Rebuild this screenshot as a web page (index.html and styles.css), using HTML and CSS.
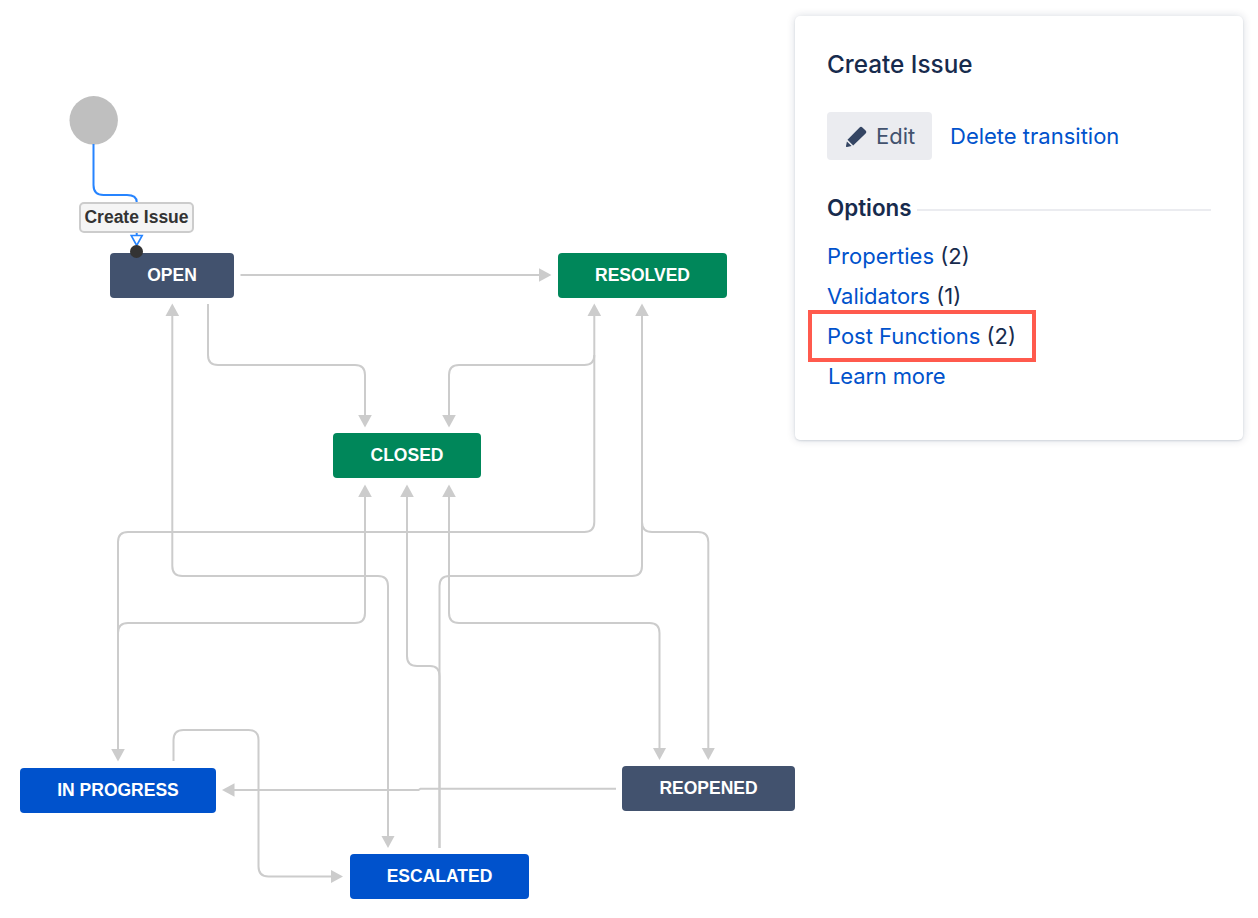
FILE: index.html
```html
<!DOCTYPE html>
<html lang="en">
<head>
<meta charset="utf-8">
<title>Create Issue transition</title>
<link rel="stylesheet" href="styles.css">
</head>
<body>
<main class="page">
  <section class="diagram">
    <svg class="edges" width="795" height="918" viewBox="0 0 795 918" aria-hidden="true">
      <defs>
        <marker id="arrow" markerUnits="userSpaceOnUse" markerWidth="14" markerHeight="14" viewBox="0 0 14 14" refX="6.5" refY="7" orient="auto-start-reverse">
          <polygon class="arrow-head" points="0,0.2 12.5,7 0,13.8"/>
        </marker>
      </defs>
      <circle class="start" cx="93.7" cy="120.3" r="24.2"/>
      <path class="edge-active" d="M93.5 144V185Q93.5 195 103.5 195H127Q136.7 195 136.7 202"/>
      <path class="edge-active" d="M136.7 232V236"/>
      <polygon class="arrow-open" points="131.2,235.5 142.2,235.5 136.7,245.5"/>
      <path class="edge head-end" d="M240.5 275H545.5"/>
      <path class="edge head-end" d="M208 304V355Q208 365 218 365H355Q365 365 365 375V421.5"/>
      <path class="edge head-both" d="M594.3 309.5V522Q594.3 532 584.3 532H128Q118 532 118 542V755.5"/>
      <path class="edge head-end" d="M594.3 355Q594.3 365 584.3 365H459Q449 365 449 375V421.5"/>
      <path class="edge head-both" d="M172.3 309.5V566Q172.3 576 182.3 576H378Q388 576 388 586V842"/>
      <path class="edge head-start" d="M365 490.5V613Q365 623 355 623H128Q118 623 118 633V740"/>
      <path class="edge head-start" d="M407 490.5V656Q407 666 417 666H430Q439.5 666 439.5 676V848"/>
      <path class="edge head-both" d="M449 490.5V613Q449 623 459 623H649.5Q659.5 623 659.5 633V754"/>
      <path class="edge head-start" d="M642 309.5V566Q642 576 632 576H449.5Q439.5 576 439.5 586V848"/>
      <path class="edge head-end" d="M642 320V522Q642 532 652 532H698Q708.3 532 708.3 542V754"/>
      <path class="edge head-end" d="M616 788.7H420.5L418.5 790H228"/>
      <path class="edge head-end" d="M173.5 761V740Q173.5 730 183.5 730H248.5Q258.5 730 258.5 740V866.5Q258.5 876.5 268.5 876.5H337"/>
    </svg>
    <div class="edge-label">Create Issue</div>
    <div class="node node-grey node-open">OPEN</div>
    <div class="node node-green node-resolved">RESOLVED</div>
    <div class="node node-green node-closed">CLOSED</div>
    <div class="node node-blue node-progress">IN PROGRESS</div>
    <div class="node node-grey node-reopened">REOPENED</div>
    <div class="node node-blue node-escalated">ESCALATED</div>
    <span class="endpoint"></span>
  </section>
  <aside class="panel">
    <h2 class="panel-title">Create Issue</h2>
    <div class="actions">
      <button class="edit-button" type="button">
        <svg class="pencil" width="21" height="21" viewBox="0 0 21 21" aria-hidden="true">
          <path d="M13.6 1.4a2 2 0 0 1 2.8 0l3.2 3.2a2 2 0 0 1 0 2.8L7.2 19.5 1.5 13.8zM.9 15.4l4.7 4.7-4.6.9a.8.8 0 0 1-1-1z"/>
        </svg>
        <span>Edit</span>
      </button>
      <a class="link" href="#">Delete transition</a>
    </div>
    <div class="section-head">
      <h3 class="section-title">Options</h3>
      <span class="section-rule"></span>
    </div>
    <ul class="options">
      <li><a class="link" href="#">Properties</a> (2)</li>
      <li><a class="link" href="#">Validators</a> (1)</li>
      <li class="highlighted"><a class="link" href="#">Post Functions</a> (2)</li>
      <li class="learn"><a class="link" href="#">Learn more</a></li>
    </ul>
  </aside>
</main>
</body>
</html>
```
FILE: styles.css
```css
*, *::after { box-sizing: border-box; }
html, body { margin: 0; padding: 0; background: #fff; }
body { font-family: Inter, "Liberation Sans", sans-serif; color: #172b4d; }

.page { display: flex; align-items: flex-start; width: 1258px; height: 918px; overflow: hidden; }

.diagram { position: relative; flex: 0 0 795px; height: 918px; }
.edges { position: absolute; left: 0; top: 0; }
.edge, .edge-active { fill: none; stroke-width: 2; }
.edge { stroke: #ccc; }
.edge-active { stroke: #2684ff; }
.head-end { marker-end: url(#arrow); }
.head-start { marker-start: url(#arrow); }
.head-both { marker-start: url(#arrow); marker-end: url(#arrow); }
.arrow-head { fill: #ccc; }
.arrow-open { fill: #fff; stroke: #2684ff; stroke-width: 1.6; }
.start { fill: #bfbfbf; }

.endpoint {
  position: absolute; left: 130px; top: 245px; width: 13px; height: 13px;
  border-radius: 50%; background: #333;
}

.edge-label {
  position: absolute; left: 79px; top: 202px; width: 115px; height: 31px;
  display: flex; align-items: center; justify-content: center;
  background: #f5f5f5; border: 2px solid #ccc; border-radius: 5px;
  font: bold 17.5px "Liberation Sans", Arial, sans-serif; color: #333;
}

.node {
  position: absolute; display: flex; align-items: center; justify-content: center;
  border-radius: 4px; color: #fff;
  font: bold 17.5px "Liberation Sans", Arial, sans-serif;
}
.node-grey { background: #42526e; }
.node-green { background: #00875a; }
.node-blue { background: #0052cc; }
.node-open { left: 110px; top: 253px; width: 124px; height: 45px; }
.node-resolved { left: 558px; top: 253px; width: 169px; height: 45px; }
.node-closed { left: 333px; top: 433px; width: 148px; height: 45px; }
.node-progress { left: 20px; top: 768px; width: 196px; height: 45px; }
.node-reopened { left: 622px; top: 766px; width: 173px; height: 45px; }
.node-escalated { left: 350px; top: 854px; width: 179px; height: 45px; }

.panel {
  flex: 0 0 448px; height: 424px; margin-top: 16px;
  padding: 32px 32px 0;
  background: #fff; border-radius: 5px;
  box-shadow: 0 0 8px rgba(9, 30, 66, 0.16), 0 1px 2px rgba(9, 30, 66, 0.12);
  font-size: 22px; line-height: 32px;
}
.panel-title { margin: 0; font-size: 24.3px; line-height: 32px; font-weight: 500; color: #172b4d; }
.actions { display: flex; align-items: center; gap: 18px; margin-top: 32px; }
.edit-button {
  display: flex; align-items: center; gap: 9px;
  width: 105px; height: 48px; padding: 0 0 0 19px;
  border: 0; border-radius: 4px; background: #ebecf0; color: #42526e;
  font: inherit;
}
.pencil { fill: #344563; flex: none; }
.link { color: #0052cc; text-decoration: none; }
.section-head { display: flex; align-items: center; gap: 5px; margin-top: 32px; }
.section-title { margin: 0; font-size: 22.4px; line-height: 32px; font-weight: 600; color: #172b4d; }
.section-rule { flex: 1; height: 2px; background: #ebecf0; margin-top: 4px; max-width: 295px; }
.options { list-style: none; margin: 16px 0 0; padding: 0; }
.options li { height: 40px; line-height: 32px; }
.highlighted { position: relative; }
.highlighted::after {
  content: ""; position: absolute; left: -19px; top: -10px; width: 228px; height: 52px;
  border: 4px solid #ff5a4d; pointer-events: none;
}
.learn { padding-left: 1px; letter-spacing: -0.15px; }
```
